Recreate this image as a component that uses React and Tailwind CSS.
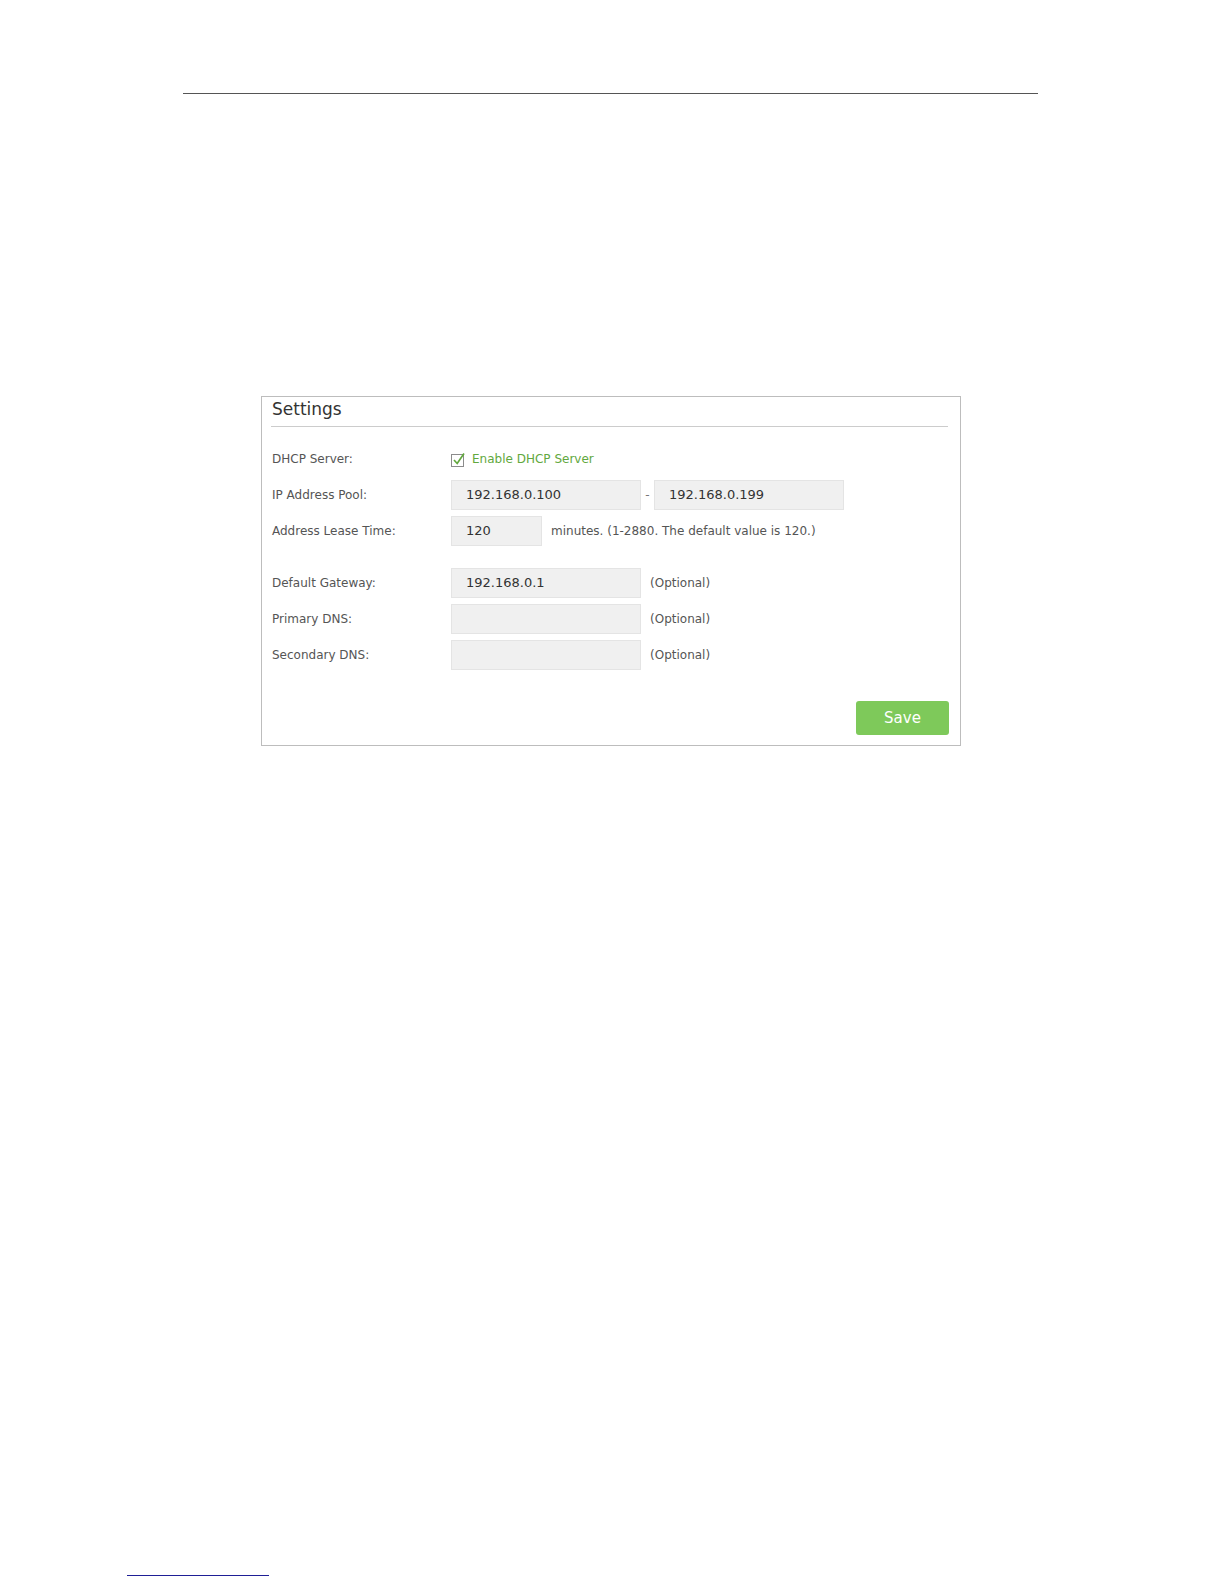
import React from 'react';

const Field = ({ value, w = 'w-[190px]' }) => (
  <div className={`${w} h-[30px] flex items-center pl-[14px] bg-[#f0f0f0] border border-[#e4e4e4] text-[13px] text-[#333]`}>
    {value}
  </div>
);

const Row = ({ label, children, className = '' }) => (
  <div className={`flex items-center h-[30px] ${className}`}>
    <div className="w-[179px] text-[12px] text-[#555]">{label}</div>
    {children}
  </div>
);

const Optional = () => <span className="ml-[9px] text-[12px] text-[#555]">(Optional)</span>;

const App = () => {
  return (
    <div className="h-[1584px] w-full bg-white flex flex-col" style={{ fontFamily: '"DejaVu Sans", Verdana, sans-serif' }}>
      {/* header rule */}
      <div className="ml-[183px] mt-[93px] w-[855px] border-t border-[#555]" />

      {/* Settings panel */}
      <div className="ml-[261px] mt-[302px] w-[700px] border border-[#bdbdbd]">
        <div className="ml-[9px] mr-[12px] h-[30px] border-b border-[#cccccc] text-[17px] leading-[24px] text-[#333] pl-[1px]">
          Settings
        </div>

        <div className="pt-[17px] pl-[10px] pr-[11px] pb-[10px] flex flex-col gap-[6px]">
          <Row label="DHCP Server:">
            <div className="flex items-center gap-[6px] text-[12px] text-[#62a83e]">
              <svg width="15" height="15" viewBox="0 0 15 15">
                <rect x="0.5" y="2.5" width="12" height="12" fill="none" stroke="#8c8c8c" strokeWidth="1" />
                <path d="M3 8 L6.2 11.5 L13 1.5" fill="none" stroke="#62a83e" strokeWidth="1.7" />
              </svg>
              Enable DHCP Server
            </div>
          </Row>
          <Row label="IP Address Pool:">
            <Field value="192.168.0.100" />
            <span className="w-[13px] text-center text-[12px] text-[#777]">-</span>
            <Field value="192.168.0.199" />
          </Row>
          <Row label="Address Lease Time:">
            <Field value="120" w="w-[91px]" />
            <span className="ml-[9px] text-[12px] text-[#555]">minutes. (1-2880. The default value is 120.)</span>
          </Row>

          <Row label="Default Gateway:" className="mt-[16px]">
            <Field value="192.168.0.1" />
            <Optional />
          </Row>
          <Row label="Primary DNS:">
            <Field value="" />
            <Optional />
          </Row>
          <Row label="Secondary DNS:">
            <Field value="" />
            <Optional />
          </Row>

          <div className="flex justify-end mt-[25px]">
            <button
              type="button"
              className="w-[93px] h-[34px] rounded-[3px] bg-[#7ec95a] text-white text-[15px]"
            >
              Save
            </button>
          </div>
        </div>
      </div>

      {/* footnote rule */}
      <div className="mt-auto mb-[8px] ml-[127px] w-[142px] border-t border-[#1f1f96]" />
    </div>
  );
};

export default App;
